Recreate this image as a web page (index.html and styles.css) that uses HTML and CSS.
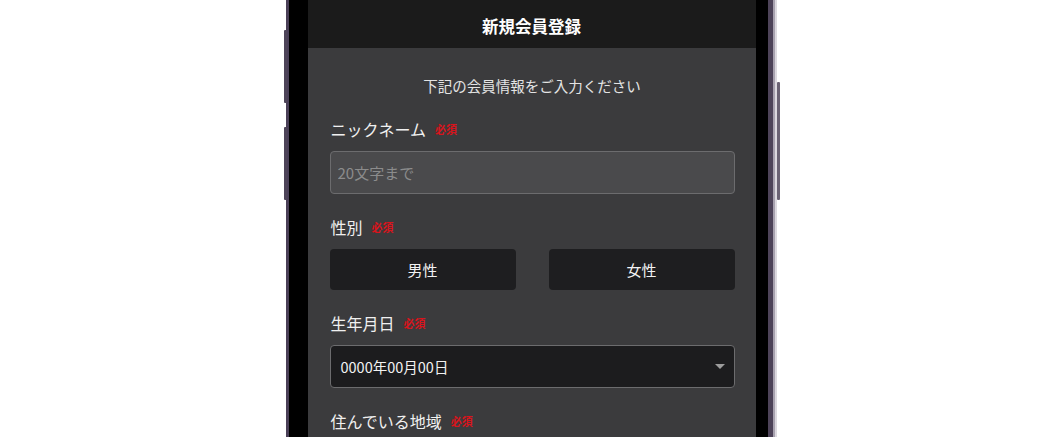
FILE: index.html
```html
<!DOCTYPE html>
<html lang="ja">
<head>
    <meta charset="UTF-8">
    <meta name="viewport" content="width=device-width, initial-scale=1.0">
    <title>新規会員登録</title>
    <link rel="stylesheet" href="styles.css">
</head>
<body>
    <div class="phone">
        <span class="side-btn left-1"></span>
        <span class="side-btn left-2"></span>
        <span class="side-btn right-1"></span>
        <div class="screen">
            <header class="app-header">新規会員登録</header>
            <main class="form">
                <p class="lead">下記の会員情報をご入力ください</p>

                <div class="field">
                    <label class="label">ニックネーム<span class="required">必須</span></label>
                    <input type="text" class="text-input" placeholder="20文字まで">
                </div>

                <div class="field">
                    <label class="label">性別<span class="required">必須</span></label>
                    <div class="gender">
                        <button class="gender-btn">男性</button>
                        <button class="gender-btn">女性</button>
                    </div>
                </div>

                <div class="field">
                    <label class="label">生年月日<span class="required">必須</span></label>
                    <div class="select">
                        <span>0000年00月00日</span>
                        <span class="caret"></span>
                    </div>
                </div>

                <div class="field">
                    <label class="label">住んでいる地域<span class="required">必須</span></label>
                </div>
            </main>
        </div>
    </div>
</body>
</html>
```

FILE: styles.css
```css
html, body {
    margin: 0;
    height: 100%;
    overflow: hidden;
}
body {
    background-color: #fff;
    font-family: "Noto Sans CJK JP", "Noto Sans", sans-serif;
    display: flex;
    justify-content: center;
}
.phone {
    position: relative;
    width: 448px;
    height: 900px;
    padding: 0 21px 0 22px;
    background: linear-gradient(to right,
        #4a3f57 0 3px,
        #000 3px calc(100% - 9px),
        #4d4358 calc(100% - 9px) calc(100% - 4px),
        #a7a1ae calc(100% - 4px) calc(100% - 2px),
        #dcd9df calc(100% - 2px));
}
.side-btn {
    position: absolute;
    width: 3px;
    background-color: #4e4459;
    border-radius: 1px;
}
.left-1 { left: -2px; top: 30px; height: 73px; }
.left-2 { left: -2px; top: 127px; height: 73px; }
.right-1 { right: -3px; top: 82px; height: 118px; background-color: #6a6273; }
.screen {
    background-color: #3b3b3d;
    height: 100%;
    color: #eee;
}
.app-header {
    height: 48px;
    box-sizing: border-box;
    padding-top: 4px;
    background-color: #1b1b1b;
    display: flex;
    align-items: center;
    justify-content: center;
    font-size: 16.5px;
    font-weight: bold;
    color: #fff;
}
.form {
    padding: 27px 21px 0 22px;
}
.lead {
    margin: 0 0 20px;
    text-align: center;
    font-size: 14.5px;
    line-height: 22px;
    color: #e4e4e4;
}
.field {
    margin-bottom: 21px;
}
.label {
    display: flex;
    align-items: center;
    height: 24px;
    margin: 0 0 10px 1px;
    font-size: 16px;
    color: #f0f0f0;
}
.required {
    margin-left: 9px;
    font-size: 11px;
    font-weight: bold;
    color: #d8141c;
}
.text-input {
    display: block;
    width: 100%;
    height: 43px;
    box-sizing: border-box;
    padding: 0 7px;
    background-color: #4a4a4c;
    border: 1px solid #6c6c6e;
    border-radius: 4px;
    font-family: inherit;
    font-size: 15px;
    color: #eee;
}
.text-input::placeholder {
    color: #8c8c8c;
}
.gender {
    display: grid;
    grid-template-columns: 1fr 1fr;
    gap: 33px;
}
.gender-btn {
    height: 41px;
    background-color: #1e1e20;
    border: none;
    border-radius: 4px;
    font-family: inherit;
    font-size: 15px;
    color: #f2f2f2;
}
.select {
    display: flex;
    align-items: center;
    justify-content: space-between;
    height: 43px;
    box-sizing: border-box;
    padding: 0 9px 0 10px;
    background-color: #1c1c1e;
    border: 1px solid #6c6c6e;
    border-radius: 4px;
    font-size: 14.5px;
    color: #f2f2f2;
}
.caret {
    width: 0;
    height: 0;
    border-left: 5px solid transparent;
    border-right: 5px solid transparent;
    border-top: 5px solid #9c9c9c;
}
```
